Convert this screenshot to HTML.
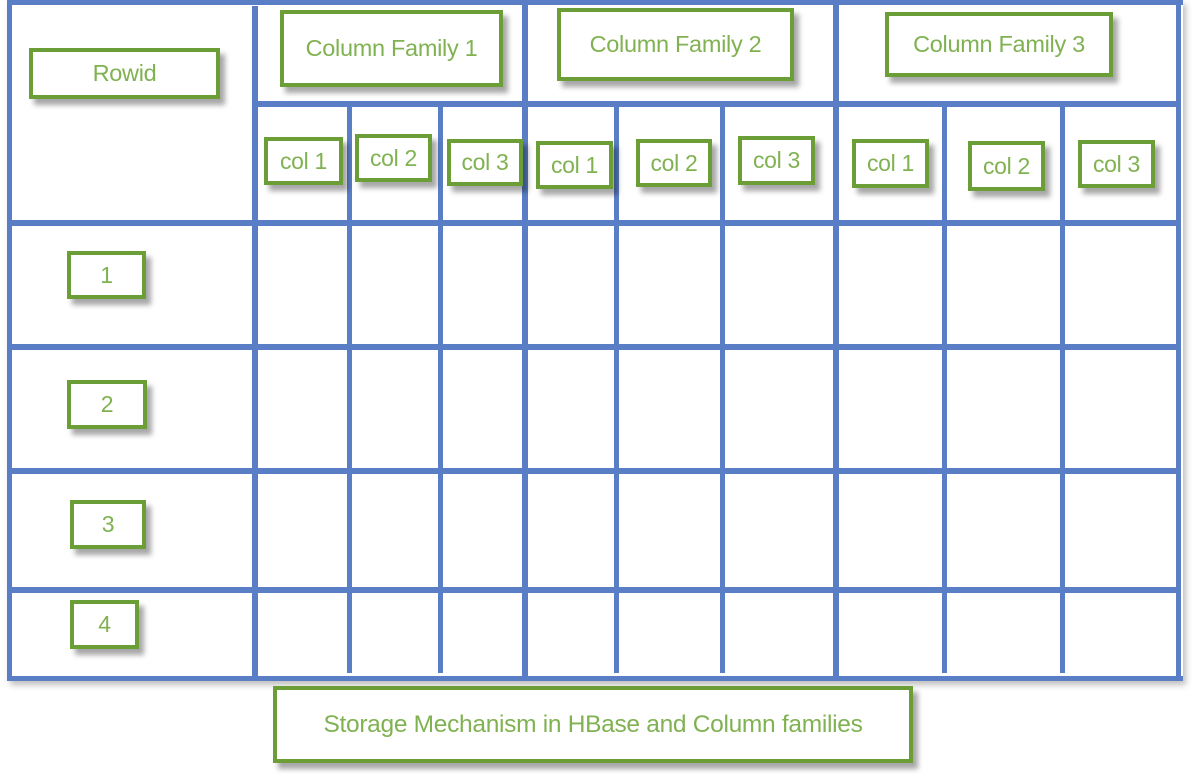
<!DOCTYPE html>
<html><head><meta charset="utf-8"><style>
body{margin:0;width:1194px;height:776px;background:#fff;position:relative;overflow:hidden;font-family:"Liberation Sans",sans-serif}
.l{position:absolute;background:#5a7ec6}
.b{position:absolute;box-sizing:border-box;border:4px solid #6b9e36;background:#fff;color:#80b252;display:flex;align-items:center;justify-content:center;box-shadow:5px 6px 5px rgba(0,0,0,.35);white-space:nowrap;letter-spacing:-0.3px}
.c{font-size:23px}
.f{font-size:23.5px}
</style></head><body>
<div style="position:absolute;left:7px;top:0;width:1176px;height:681px;box-shadow:3px 4px 6px rgba(0,0,0,.25)"></div>
<div class="l" style="left:7px;top:0;width:1176px;height:5px"></div>
<div class="l" style="left:7px;top:676px;width:1176px;height:5px"></div>
<div class="l" style="left:7px;top:0;width:5px;height:681px"></div>
<div class="l" style="left:1176px;top:0;width:5px;height:681px"></div>
<div class="l" style="left:252px;top:6px;width:6px;height:672px"></div>
<div class="l" style="left:522px;top:4px;width:6px;height:674px"></div>
<div class="l" style="left:833px;top:4px;width:6px;height:674px"></div>
<div class="l" style="left:347px;top:107px;width:5px;height:566px"></div>
<div class="l" style="left:438px;top:107px;width:5px;height:566px"></div>
<div class="l" style="left:614px;top:107px;width:5px;height:566px"></div>
<div class="l" style="left:720px;top:107px;width:5px;height:566px"></div>
<div class="l" style="left:942px;top:107px;width:5px;height:566px"></div>
<div class="l" style="left:1060px;top:107px;width:5px;height:566px"></div>
<div class="l" style="left:255px;top:101px;width:923px;height:6px"></div>
<div class="l" style="left:12px;top:220px;width:1166px;height:6px"></div>
<div class="l" style="left:12px;top:344px;width:1166px;height:6px"></div>
<div class="l" style="left:12px;top:468px;width:1166px;height:6px"></div>
<div class="l" style="left:12px;top:587px;width:1166px;height:6px"></div>
<div class="b f" style="left:29px;top:48px;width:191px;height:51px">Rowid</div>
<div class="b f" style="left:280px;top:10px;width:223px;height:77px">Column Family 1</div>
<div class="b f" style="left:557px;top:8px;width:237px;height:73px">Column Family 2</div>
<div class="b f" style="left:885px;top:12px;width:228px;height:65px">Column Family 3</div>
<div class="b c" style="left:264px;top:137px;width:79px;height:48px">col 1</div>
<div class="b c" style="left:355px;top:134px;width:77px;height:48px">col 2</div>
<div class="b c" style="left:447px;top:139px;width:76px;height:47px">col 3</div>
<div class="b c" style="left:536px;top:141px;width:77px;height:48px">col 1</div>
<div class="b c" style="left:636px;top:139px;width:76px;height:48px">col 2</div>
<div class="b c" style="left:738px;top:136px;width:77px;height:49px">col 3</div>
<div class="b c" style="left:852px;top:139px;width:77px;height:49px">col 1</div>
<div class="b c" style="left:968px;top:141px;width:77px;height:50px">col 2</div>
<div class="b c" style="left:1078px;top:140px;width:77px;height:48px">col 3</div>
<div class="b c" style="left:67px;top:251px;width:79px;height:48px">1</div>
<div class="b c" style="left:67px;top:380px;width:80px;height:49px">2</div>
<div class="b c" style="left:70px;top:500px;width:76px;height:49px">3</div>
<div class="b c" style="left:70px;top:600px;width:69px;height:49px">4</div>
<div class="b f" style="left:273px;top:686px;width:640px;height:77px;font-size:24.5px">Storage Mechanism in HBase and Column families</div>
</body></html>
